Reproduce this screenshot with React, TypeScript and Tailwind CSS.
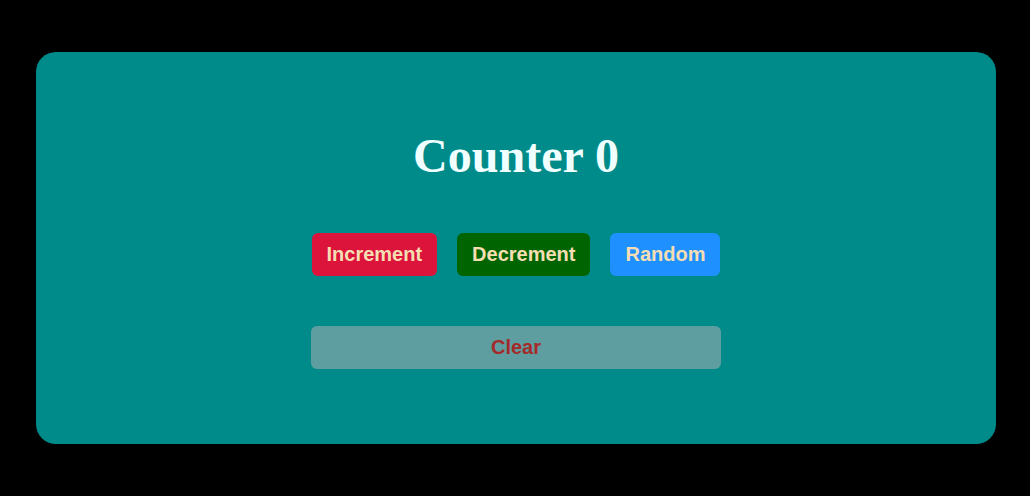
const App = () => {
  const buttons = [
    { label: 'Increment', bg: 'bg-[#dc143c]' },
    { label: 'Decrement', bg: 'bg-[#006400]' },
    { label: 'Random', bg: 'bg-[#1e90ff]' },
  ];

  return (
    <div className="min-h-screen bg-black pt-[52px] pb-[52px]">
      <div className="ml-[36px] w-[960px] h-[392px] rounded-[20px] bg-[#008b8b] flex flex-col items-center pt-[77px]">
        <h1 className="font-['Liberation_Serif',serif] font-bold text-[48px] leading-[53px] text-[#f0ffff]">
          Counter 0
        </h1>
        <div className="mt-[51px] flex gap-[20px]">
          {buttons.map((b) => (
            <button
              key={b.label}
              className={`${b.bg} px-[15px] pb-[2px] h-[43px] rounded-[6px] font-['Liberation_Sans',Arial,sans-serif] font-bold text-[20px] text-[#f5deb3]`}
            >
              {b.label}
            </button>
          ))}
        </div>
        <button className="mt-[50px] w-[410px] h-[43px] pb-[2px] rounded-[6px] bg-[#5f9ea0] font-['Liberation_Sans',Arial,sans-serif] font-bold text-[20px] text-[#a52a2a]">
          Clear
        </button>
      </div>
    </div>
  );
};

export default App;
